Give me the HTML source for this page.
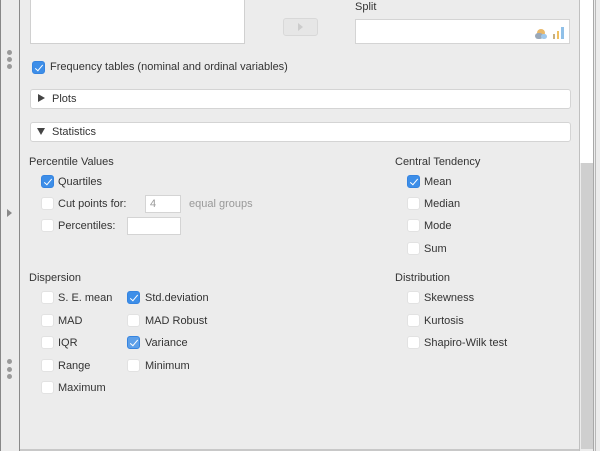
<!DOCTYPE html>
<html><head><style>
*{margin:0;padding:0;box-sizing:border-box}
body{width:600px;height:451px;overflow:hidden;background:#ececec;font-family:"Liberation Sans",sans-serif;font-size:11px;color:#333;position:relative}
.a{position:absolute}
.t{position:absolute;white-space:nowrap;line-height:13px}
.cb{position:absolute;width:13px;height:13px;border:1px solid #e2e2e2;background:#fff;border-radius:3px}
.cb.on{background:#3d8ee8;border-color:#3584e0}
.cb.on::after{content:"";position:absolute;left:4px;top:1px;width:3px;height:7px;border:solid #fff;border-width:0 1.5px 1.5px 0;transform:rotate(40deg)}
.box{position:absolute;background:#fff;border:1px solid #d4d4d4;border-radius:3px}
.dot{position:absolute;width:5px;height:5px;border-radius:50%;background:#999}
.g{color:#999}
</style></head><body>
<div class="a" style="left:0;top:0;width:1px;height:451px;background:#888"></div>
<div class="a" style="left:19px;top:0;width:1px;height:451px;background:#8a8a8a"></div>
<div class="dot" style="left:7px;top:50px"></div><div class="dot" style="left:7px;top:57px"></div><div class="dot" style="left:7px;top:64px"></div>
<div class="dot" style="left:7px;top:359px"></div><div class="dot" style="left:7px;top:367px"></div><div class="dot" style="left:7px;top:374px"></div>
<div class="a" style="left:7px;top:209px;width:0;height:0;border-left:5px solid #888;border-top:4px solid transparent;border-bottom:4px solid transparent"></div>

<div class="a" style="left:30px;top:-2px;width:215px;height:46px;background:#fff;border:1px solid #d0d0d0"></div>
<div class="a" style="left:283px;top:18px;width:35px;height:18px;background:#e6e6e6;border:1px solid #d8d8d8;border-radius:3px"></div>
<div class="a" style="left:298px;top:23px;border-left:5px solid #ccc;border-top:4px solid transparent;border-bottom:4px solid transparent"></div>
<div class="t" style="left:355px;top:1px">Split</div>
<div class="a" style="left:355px;top:19px;width:215px;height:25px;background:#fff;border:1px solid #d4d4d4"></div>
<div class="a" style="left:537px;top:29px;width:8px;height:8px;border-radius:50%;background:#e8b86a"></div>
<div class="a" style="left:535px;top:33px;width:8px;height:6px;border-radius:3px;background:#9aa8b8"></div>
<div class="a" style="left:541px;top:34px;width:6px;height:5px;border-radius:3px;background:#9fc8ec"></div>
<div class="a" style="left:553px;top:34px;width:2px;height:5px;background:#c8b080"></div>
<div class="a" style="left:557px;top:31px;width:2px;height:8px;background:#f0c060"></div>
<div class="a" style="left:561px;top:27px;width:3px;height:12px;background:#90c0e8"></div>

<div class="cb on" style="left:32px;top:61px"></div>
<div class="t" style="left:50px;top:61px">Frequency tables (nominal and ordinal variables)</div>

<div class="box" style="left:30px;top:89px;width:541px;height:20px"></div>
<div class="a" style="left:38px;top:94px;border-left:7px solid #444;border-top:4px solid transparent;border-bottom:4px solid transparent"></div>
<div class="t" style="left:52px;top:93px">Plots</div>
<div class="box" style="left:30px;top:122px;width:541px;height:20px"></div>
<div class="a" style="left:37px;top:128px;border-top:7px solid #444;border-left:4px solid transparent;border-right:4px solid transparent"></div>
<div class="t" style="left:52px;top:126px">Statistics</div>

<div class="t" style="left:29px;top:156px">Percentile Values</div>
<div class="cb on" style="left:41px;top:175px"></div><div class="t" style="left:58px;top:176px">Quartiles</div>
<div class="cb" style="left:41px;top:197px"></div><div class="t" style="left:58px;top:198px">Cut points for:</div>
<div class="a" style="left:145px;top:195px;width:36px;height:18px;background:#fff;border:1px solid #d4d4d4"></div>
<div class="t g" style="left:150px;top:198px">4</div>
<div class="t g" style="left:189px;top:198px">equal groups</div>
<div class="cb" style="left:41px;top:219px"></div><div class="t" style="left:58px;top:220px">Percentiles:</div>
<div class="a" style="left:127px;top:217px;width:54px;height:18px;background:#fff;border:1px solid #d4d4d4"></div>

<div class="t" style="left:29px;top:272px">Dispersion</div>
<div class="cb" style="left:41px;top:291px"></div><div class="t" style="left:58px;top:292px">S. E. mean</div>
<div class="cb on" style="left:127px;top:291px"></div><div class="t" style="left:145px;top:292px">Std.deviation</div>
<div class="cb" style="left:41px;top:314px"></div><div class="t" style="left:58px;top:315px">MAD</div>
<div class="cb" style="left:127px;top:314px"></div><div class="t" style="left:145px;top:315px">MAD Robust</div>
<div class="cb" style="left:41px;top:336px"></div><div class="t" style="left:58px;top:337px">IQR</div>
<div class="cb on" style="left:127px;top:336px;background:#5d9fe8"></div><div class="t" style="left:145px;top:337px">Variance</div>
<div class="cb" style="left:41px;top:359px"></div><div class="t" style="left:58px;top:360px">Range</div>
<div class="cb" style="left:127px;top:359px"></div><div class="t" style="left:145px;top:360px">Minimum</div>
<div class="cb" style="left:41px;top:381px"></div><div class="t" style="left:58px;top:382px">Maximum</div>

<div class="t" style="left:395px;top:156px">Central Tendency</div>
<div class="cb on" style="left:407px;top:175px"></div><div class="t" style="left:424px;top:176px">Mean</div>
<div class="cb" style="left:407px;top:197px"></div><div class="t" style="left:424px;top:198px">Median</div>
<div class="cb" style="left:407px;top:219px"></div><div class="t" style="left:424px;top:220px">Mode</div>
<div class="cb" style="left:407px;top:242px"></div><div class="t" style="left:424px;top:243px">Sum</div>
<div class="t" style="left:395px;top:272px">Distribution</div>
<div class="cb" style="left:407px;top:291px"></div><div class="t" style="left:424px;top:292px">Skewness</div>
<div class="cb" style="left:407px;top:314px"></div><div class="t" style="left:424px;top:315px">Kurtosis</div>
<div class="cb" style="left:407px;top:336px"></div><div class="t" style="left:424px;top:337px">Shapiro-Wilk test</div>

<div class="a" style="left:20px;top:449px;width:559px;height:2px;background:#c8c8c8"></div>
<div class="a" style="left:579px;top:0;width:1px;height:451px;background:#c0c0c0"></div>
<div class="a" style="left:580px;top:0;width:13px;height:163px;background:#fff"></div>
<div class="a" style="left:581px;top:163px;width:12px;height:286px;background:#cfcfcf"></div>
<div class="a" style="left:593px;top:0;width:1px;height:451px;background:#a8a8a8"></div>
<div class="a" style="left:595px;top:0;width:1px;height:451px;background:#b8b8b8"></div>
</body></html>
